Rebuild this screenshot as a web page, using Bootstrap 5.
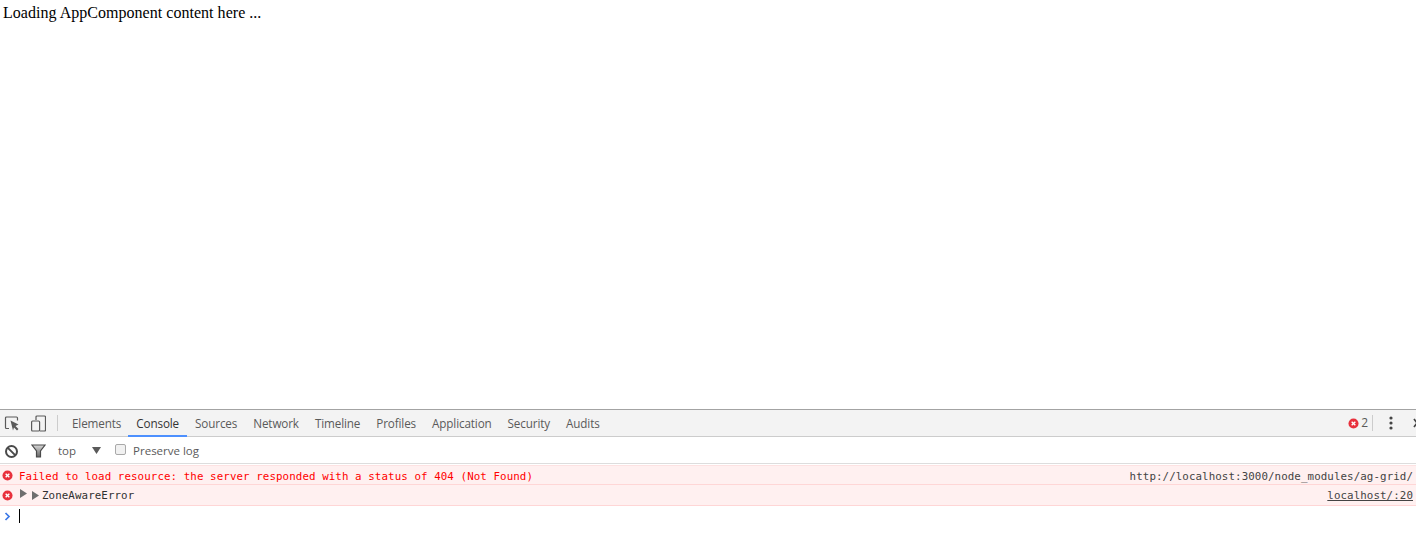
<!DOCTYPE html>
<html lang="en">
<head>
<meta charset="utf-8">
<title>Loading</title>
<link rel="stylesheet" href="https://cdn.jsdelivr.net/npm/bootstrap@5.3.0/dist/css/bootstrap.min.css">
<style>
html,body{height:559px;overflow:hidden;background:#fff}
.app-area{height:409px;padding:4px 3px;font:16px/18px "Liberation Serif",serif;color:#000;letter-spacing:.03px}
.dt{font:12px/16px "Open Sans","Noto Sans",sans-serif;color:#5a5a5a}
.dt-tabs{height:28px;background:#f3f3f3;border-top:1px solid #a3a3a3;border-bottom:1px solid #ccc}
.dt-tools{width:64px;padding-left:4px;gap:11px}
.dt-vsep{width:1px;height:16px;background:#ccc}
.dt-sep-tools{margin-right:6px}
.dt-tab{height:27px;padding:0 8px;line-height:27px;color:#5a5a5a;font-size:11.7px;letter-spacing:-.13px;flex:none}
.dt-tab-first{padding-right:7px}
.dt-tab.sel{color:#333;border-bottom:2px solid #4d90fe}
.dt-right{flex:none;font-size:12px}
.dt-count{margin-left:2px}
.dt-bar{height:27px;border-bottom:1px solid #ddd;padding:2px 0 0 4px;font-size:11.5px}
.dt-check{width:11px;height:11px;border:1px solid #a9a9a9;border-radius:2px;background:#f1f1f1;margin:0 7px 3px 14px}
.dt-msgs{margin-top:1px;border-top:1px solid #fde2e2}
.dt-msg{background:#fff0f0;border-bottom:1px solid #ffd6d6;font:10.8px/19px "DejaVu Sans Mono",monospace;letter-spacing:.09px;color:#f00;padding:0 3px 0 2px}
.dt-msg.m1{height:19px}
.dt-msg.m1 span{padding-top:2px}
.dt-msg.m2{height:21px;color:#303030}
.dt-src{color:#444}
.dt-under{text-decoration:underline}
.dt-caret{width:1px;height:14px;background:#000;margin-left:8px}
.dt-x{width:11px;height:11px;flex:none}
.dt-filter{margin-left:12px}
.dt-top{margin-left:12px}
.dt-arrow{margin:0 0 2px 16px}
.dt-dots{margin-left:16px}
.dt-close{margin-left:19px;margin-right:-6px}
.dt-tri1{margin:0 0 3px 7px}
.dt-tri2{margin-left:4px}
.dt-errtxt{margin-left:6px}
.dt-errname{margin-left:2px}
.dt-prompt{height:20px;padding-left:4px}
</style>
</head>
<body>
<div class="app-area">Loading AppComponent content here ...</div>
<div class="dt">
  <div class="dt-tabs d-flex align-items-center">
    <div class="dt-tools d-flex align-items-center">
      <svg width="16" height="16" viewBox="0 0 16 16"><path d="M5 13.500H2.500a1 1 0 0 1-1-1V3a1 1 0 0 1 1-1h10a1 1 0 0 1 1 1v2.500" fill="none" stroke="#5a5a5a" stroke-width="1.2"/><path d="M6.500 5.500l8 4-3 1.500 3 3-1.500 1.500-3-3-1 3z" fill="#5a5a5a"/></svg>
      <svg width="15" height="17" viewBox="0 0 15 17"><path d="M5 5V2a1 1 0 0 1 1-1h7.500a1 1 0 0 1 1 1v13a1 1 0 0 1-1 1H9" fill="none" stroke="#5a5a5a" stroke-width="1.2"/><rect x=".6" y="6" width="8" height="10" rx="1" fill="none" stroke="#5a5a5a" stroke-width="1.2"/></svg>
      <span class="dt-vsep dt-sep-tools ms-auto"></span>
    </div>
    <span class="dt-tab dt-tab-first">Elements</span>
    <span class="dt-tab sel">Console</span>
    <span class="dt-tab">Sources</span>
    <span class="dt-tab">Network</span>
    <span class="dt-tab">Timeline</span>
    <span class="dt-tab">Profiles</span>
    <span class="dt-tab">Application</span>
    <span class="dt-tab">Security</span>
    <span class="dt-tab">Audits</span>
    <div class="dt-right ms-auto d-flex align-items-center">
      <svg class="dt-x" viewBox="0 0 12 12"><circle cx="6" cy="6" r="5.500" fill="#e8303c"/><path d="M4 4l4 4M8 4l-4 4" stroke="#fff" stroke-width="1.5"/></svg>
      <span class="dt-count">2</span>
      <span class="dt-vsep ms-1"></span>
      <svg class="dt-dots" width="4" height="14" viewBox="0 0 4 14"><circle cx="2" cy="2" r="1.600" fill="#444"/><circle cx="2" cy="7" r="1.600" fill="#444"/><circle cx="2" cy="12" r="1.600" fill="#444"/></svg>
      <svg class="dt-close" width="10" height="12" viewBox="0 0 10 12"><path d="M2 2l6 8M8 2l-6 8" stroke="#444" stroke-width="1.700"/></svg>
    </div>
  </div>
  <div class="dt-bar d-flex align-items-center">
    <svg width="15" height="15" viewBox="0 0 15 15"><circle cx="7.500" cy="7.500" r="5.500" fill="none" stroke="#4a4a4a" stroke-width="2"/><path d="M3.600 3.600l7.800 7.800" stroke="#4a4a4a" stroke-width="2"/></svg>
    <svg class="dt-filter" width="15" height="14" viewBox="0 0 15 14"><defs><linearGradient id="fg" x1="0" y1="0" x2="0" y2="1"><stop offset="0" stop-color="#d8d8d8"/><stop offset="1" stop-color="#666"/></linearGradient></defs><path d="M1 1h13L9.500 7v6h-4V7z" fill="url(#fg)" stroke="#4a4a4a" stroke-width="1.200"/></svg>
    <span class="dt-top">top</span>
    <svg class="dt-arrow" width="9" height="7" viewBox="0 0 9 7"><path d="M0 0h9L4.500 7z" fill="#5a5a5a"/></svg>
    <span class="dt-check"></span>
    <span>Preserve log</span>
  </div>
  <div class="dt-msgs">
    <div class="dt-msg m1 d-flex align-items-center">
      <svg class="dt-x" viewBox="0 0 12 12"><circle cx="6" cy="6" r="5.500" fill="#e8303c"/><path d="M4 4l4 4M8 4l-4 4" stroke="#fff" stroke-width="1.500"/></svg>
      <span class="dt-errtxt">Failed to load resource: the server responded with a status of 404 (Not Found)</span>
      <span class="dt-src ms-auto">http://localhost:3000/node_modules/ag-grid/</span>
    </div>
    <div class="dt-msg m2 d-flex align-items-center">
      <svg class="dt-x" viewBox="0 0 12 12"><circle cx="6" cy="6" r="5.500" fill="#e8303c"/><path d="M4 4l4 4M8 4l-4 4" stroke="#fff" stroke-width="1.500"/></svg>
      <svg class="dt-tri1" width="8" height="9" viewBox="0 0 8 9"><path d="M0 0l7 4.500L0 9z" fill="#6e6e6e"/></svg>
      <svg class="dt-tri2" width="8" height="9" viewBox="0 0 8 9"><path d="M0 0l7 4.500L0 9z" fill="#6e6e6e"/></svg>
      <span class="dt-errname">ZoneAwareError</span>
      <span class="dt-src dt-under ms-auto">localhost/:20</span>
    </div>
  </div>
  <div class="dt-prompt d-flex align-items-center">
    <svg width="7" height="9" viewBox="0 0 7 9"><path d="M1.500 1L5 4.500 1.500 8" fill="none" stroke="#3b78e7" stroke-width="1.700"/></svg>
    <span class="dt-caret"></span>
  </div>
</div>
</body>
</html>
